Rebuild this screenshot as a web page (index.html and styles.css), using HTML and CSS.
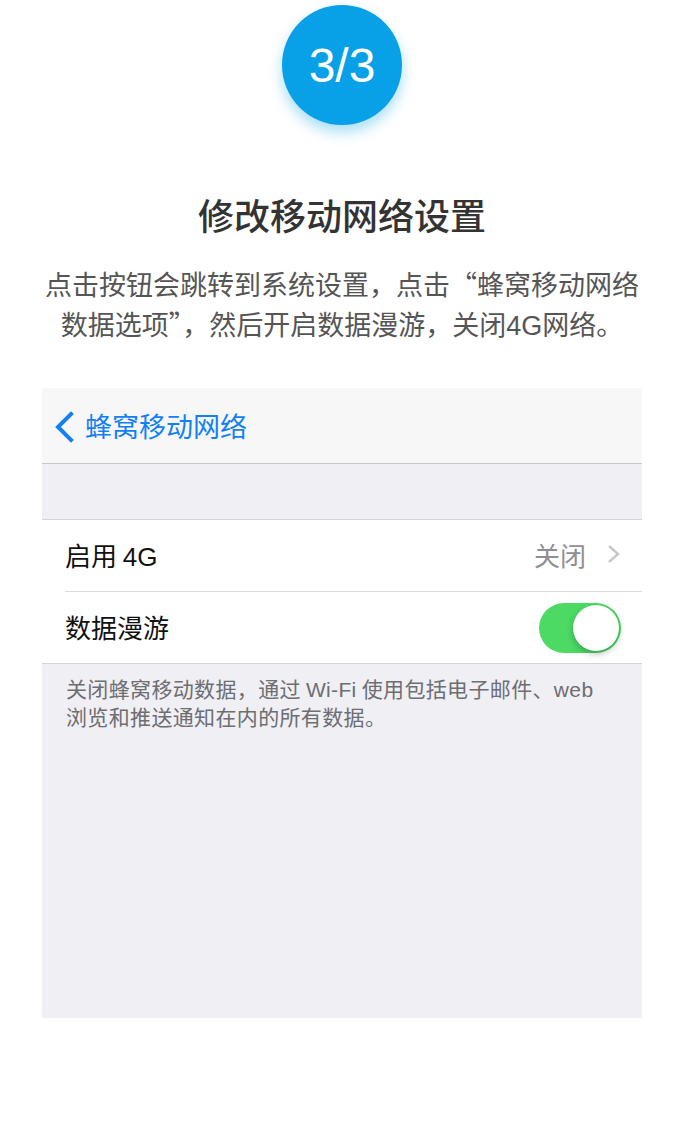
FILE: index.html
```html
<!DOCTYPE html>
<html lang="zh-CN">
<head>
<meta charset="utf-8">
<title>修改移动网络设置</title>
<link rel="stylesheet" href="styles.css">
</head>
<body>
<div class="page">
  <div class="step">3/3</div>
  <h1 class="title">修改移动网络设置</h1>
  <p class="desc">点击按钮会跳转到系统设置，点击“蜂窝移动网络<br>数据选项”，然后开启数据漫游，关闭<span class="latin">4G</span>网络。</p>

  <div class="phone">
    <div class="nav">
      <svg class="back" width="22" height="32" viewBox="0 0 22 32"><path d="M18 3 L5 16 L18 29" fill="none" stroke="#127ff5" stroke-width="4" stroke-linecap="square"/></svg>
      <span class="nav-title">蜂窝移动网络</span>
    </div>
    <div class="gap"></div>
    <div class="group">
      <div class="row">
        <span class="label">启用 <span class="latin">4G</span></span>
        <span class="value">关闭
          <svg class="chev" width="16" height="20" viewBox="0 0 16 20"><path d="M3 2 L12 10 L3 18" fill="none" stroke="#c7c7cc" stroke-width="2.4"/></svg>
        </span>
      </div>
      <div class="row">
        <span class="label">数据漫游</span>
        <span class="toggle"><span class="knob"></span></span>
      </div>
    </div>
    <div class="footer">关闭蜂窝移动数据，通过 <span class="latin">Wi-Fi</span> 使用包括电子邮件、<span class="latin">web</span><br>浏览和推送通知在内的所有数据。</div>
  </div>
</div>
</body>
</html>
```

FILE: styles.css
```css
html, body {
  margin: 0;
  padding: 0;
  background: #fff;
}
body {
  font-family: "Noto Sans CJK SC", "Noto Sans", sans-serif;
}
.latin {
  font-family: "Liberation Sans", Arial, sans-serif;
}
.page {
  display: flex;
  flex-direction: column;
  align-items: center;
  padding-top: 5px;
}
.step {
  width: 120px;
  height: 120px;
  border-radius: 50%;
  background: #08a0e7;
  color: #fff;
  font-family: "Liberation Sans", Arial, sans-serif;
  font-size: 48px;
  display: flex;
  align-items: center;
  justify-content: center;
  box-shadow: 0 7px 14px rgba(0, 160, 233, 0.35);
}
.title {
  margin: 64px 0 0;
  font-size: 36px;
  font-weight: 500;
  line-height: 50px;
  color: #333;
}
.desc {
  margin: 25px 0 0;
  font-size: 27px;
  line-height: 40px;
  color: #555;
  text-align: center;
  white-space: nowrap;
}
.phone {
  margin-top: 42px;
  width: 600px;
  height: 630px;
  background: #efeff4;
  display: flex;
  flex-direction: column;
}
.nav {
  height: 75px;
  background: #f7f7f8;
  border-bottom: 1px solid #c8c7cc;
  display: flex;
  align-items: center;
  padding-left: 11px;
  gap: 10px;
}
.back {
  display: block;
  margin-top: 2px;
}
.nav-title {
  font-size: 27px;
  color: #127ff5;
}
.gap {
  height: 55px;
  border-bottom: 1px solid #d3d3d8;
}
.group {
  background: #fff;
  padding-left: 23px;
  border-bottom: 1px solid #d3d3d8;
}
.row {
  height: 71px;
  display: flex;
  align-items: center;
  justify-content: space-between;
  padding-right: 21px;
}
.row:first-child {
  padding-right: 20px;
}
.row + .row {
  border-top: 1px solid #dcdce0;
}
.label {
  font-size: 26px;
  color: #111;
  margin-top: -3px;
}
.value {
  font-size: 26px;
  color: #8e8e93;
  display: flex;
  align-items: center;
  gap: 20px;
  margin-top: -3px;
}
.chev {
  display: block;
}
.toggle {
  width: 82px;
  height: 50px;
  border-radius: 25px;
  background: #4cd964;
  position: relative;
}
.knob {
  position: absolute;
  right: 2px;
  top: 2px;
  width: 46px;
  height: 46px;
  border-radius: 50%;
  background: #fff;
  box-shadow: 0 3px 6px rgba(0, 0, 0, 0.25);
}
.footer {
  padding: 11px 0 0 24px;
  font-size: 21px;
  line-height: 27px;
  letter-spacing: 0.35px;
  color: #6d6d72;
}
```
